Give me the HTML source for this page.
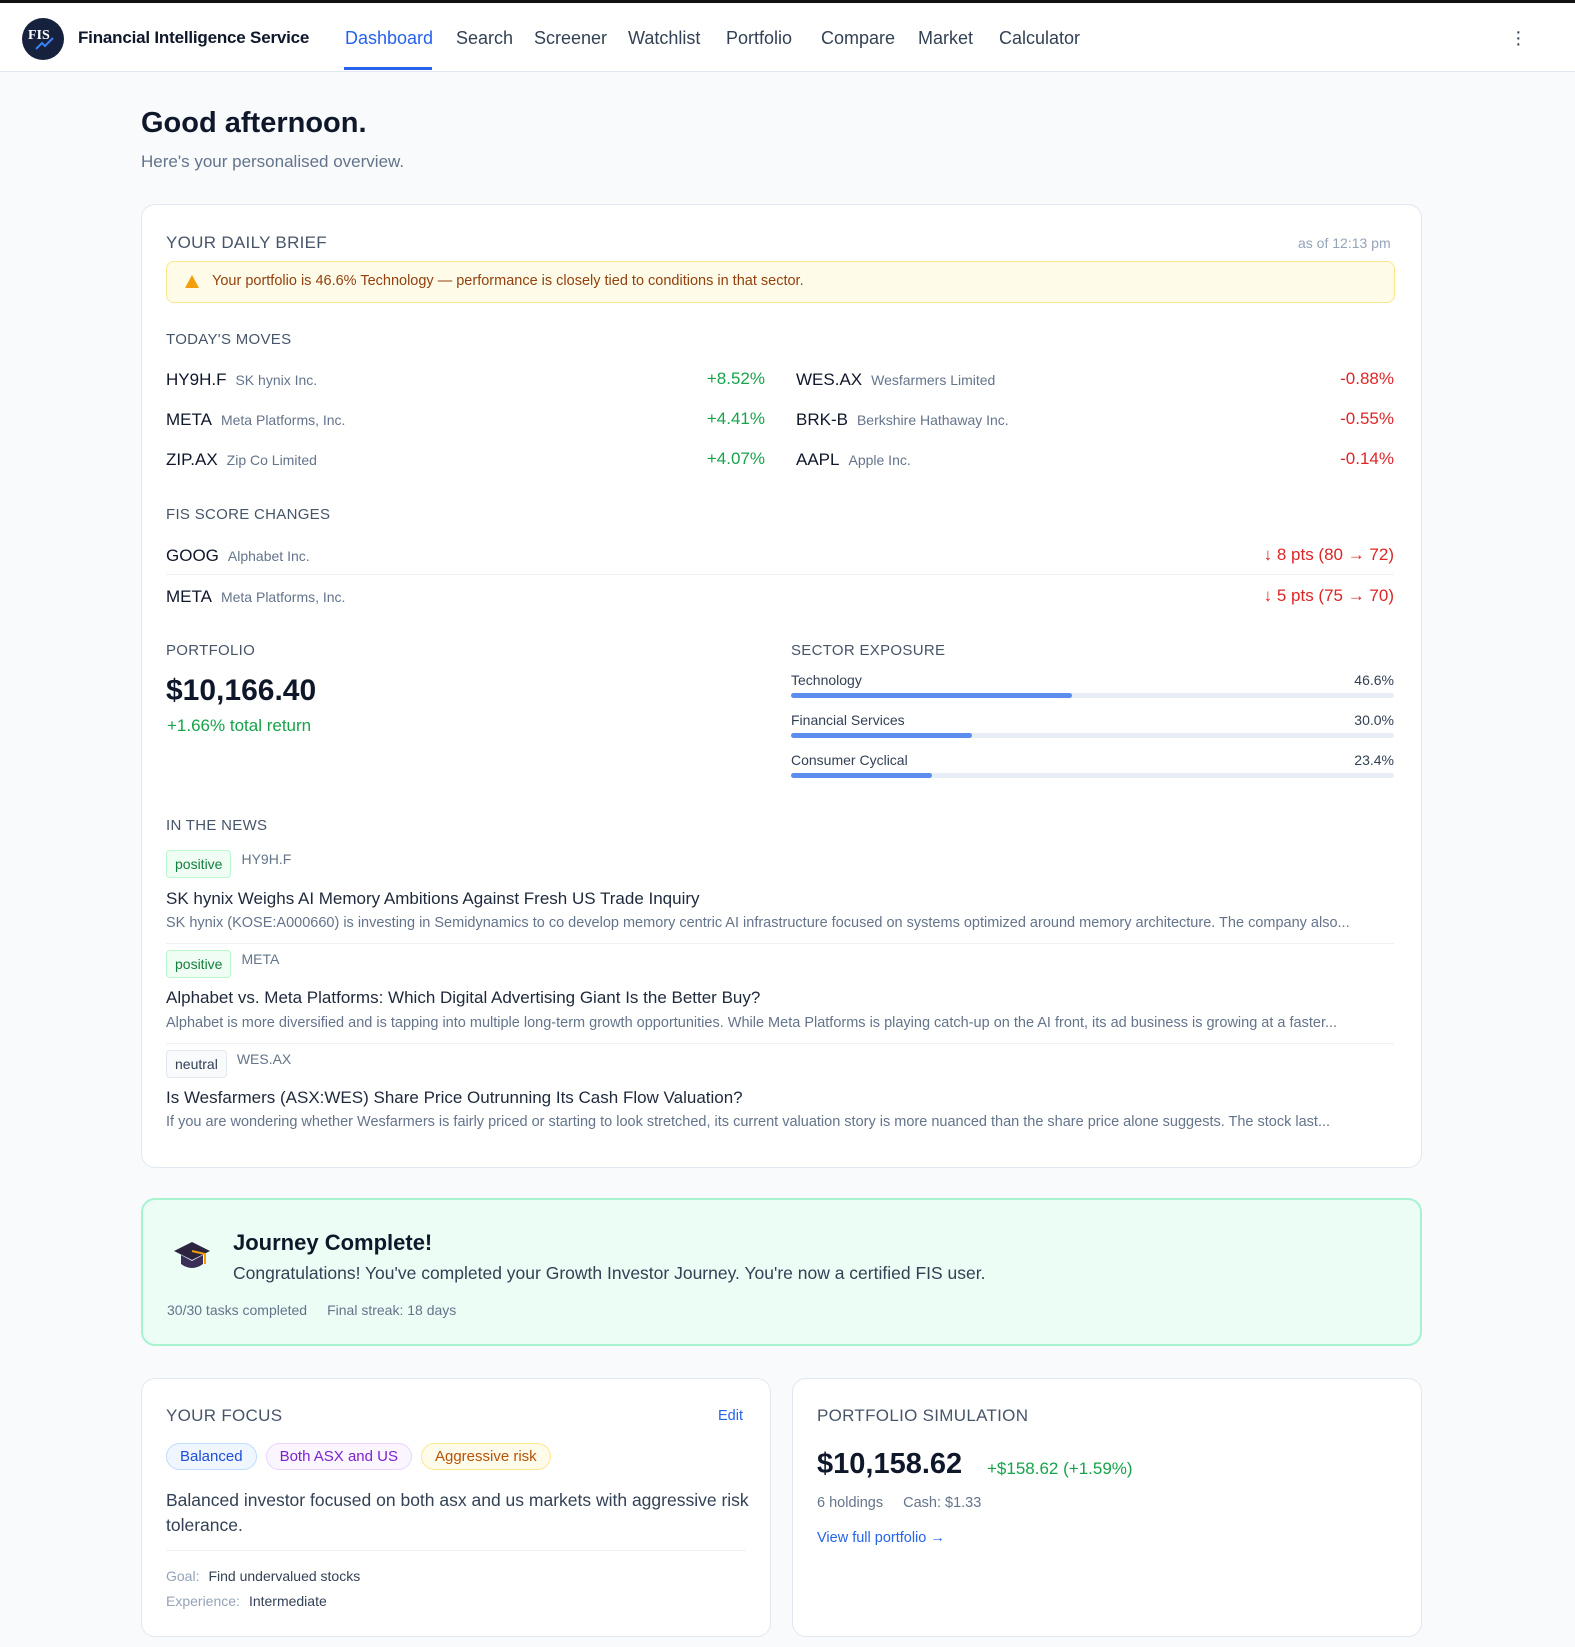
<!DOCTYPE html>
<html><head><meta charset="utf-8"><style>
*{box-sizing:border-box;margin:0;padding:0}
body{width:1575px;height:1647px;background:#f8fafc;font-family:"Liberation Sans",sans-serif;color:#0f172a;position:relative;overflow:hidden}
.a{position:absolute;white-space:nowrap}
.nav{position:absolute;left:0;top:0;width:1575px;height:72px;background:#fff;border-top:3px solid #111;border-bottom:1px solid #e2e8f0}
.nav .i{position:absolute;top:25px;font-size:18px;color:#334155}
.card{position:absolute;background:#fff;border:1px solid #e2e8f0;border-radius:14px}
.lbl{font-size:15px;color:#475569;letter-spacing:.3px}
.tk{font-size:17px;color:#0f172a}
.co{font-size:14px;color:#64748b;margin-left:9px}
.g{color:#16a34a;font-size:17px}
.r{color:#dc2626;font-size:17px}
.bar{position:absolute;height:5px;background:#e8eef5;border-radius:3px;left:791px;width:603px}
.bar i{display:block;height:5px;background:#5b8def;border-radius:3px}
.badge{font-size:14px;padding:5px 8px;border-radius:4px;border:1px solid}
.nt{font-size:17px;color:#1e293b}
.nd{font-size:14.5px;color:#64748b}
.sep{position:absolute;left:166px;width:1228px;height:1px;background:#eef1f5}
.pill{display:inline-block;font-size:15px;padding:4px 13px;border-radius:14px;border:1px solid;margin-right:9px}
</style></head><body>
<div class="nav">
<svg class="a" style="left:22px;top:15px" width="42" height="42" viewBox="0 0 42 42"><circle cx="21" cy="21" r="21" fill="#16213e"/><text x="6" y="21" font-family="Liberation Serif" font-size="14" font-weight="bold" fill="#fff">FIS</text><path d="M14 31 L20 25 L23 28 L31 20" stroke="#3b82f6" stroke-width="2" fill="none"/></svg>
<div class="a" style="left:78px;top:25px;font-size:17px;font-weight:bold;color:#0f172a;letter-spacing:-.2px">Financial Intelligence Service</div>
<div class="i a" style="left:345px;color:#2563eb">Dashboard</div>
<div class="a" style="left:344px;top:64px;width:88px;height:3px;background:#2563eb"></div>
<div class="i a" style="left:456px">Search</div>
<div class="i a" style="left:534px">Screener</div>
<div class="i a" style="left:628px">Watchlist</div>
<div class="i a" style="left:726px">Portfolio</div>
<div class="i a" style="left:821px">Compare</div>
<div class="i a" style="left:918px">Market</div>
<div class="i a" style="left:999px">Calculator</div>
<div class="a" style="left:1515px;top:26px;font-size:20px;color:#334155;line-height:6px">·<br>·<br>·</div>
</div>
<div class="a" style="left:141px;top:107px;font-size:29px;font-weight:bold">Good afternoon.</div>
<div class="a" style="left:141px;top:152px;font-size:17px;color:#64748b">Here's your personalised overview.</div>

<div class="card" style="left:141px;top:204px;width:1281px;height:964px"></div>
<div class="a lbl" style="left:166px;top:233px;font-size:17px">YOUR DAILY BRIEF</div>
<div class="a" style="left:1298px;top:235px;font-size:14px;color:#94a3b8">as of 12:13 pm</div>
<div class="a" style="left:166px;top:261px;width:1229px;height:42px;background:#fefce8;border:1px solid #fde68a;border-radius:8px"></div>
<div class="a" style="left:185px;top:275px;width:0;height:0;border-left:7px solid transparent;border-right:7px solid transparent;border-bottom:13px solid #f59e0b"></div>
<div class="a" style="left:212px;top:273px;font-size:14.5px;color:#92400e">Your portfolio is 46.6% Technology — performance is closely tied to conditions in that sector.</div>

<div class="a lbl" style="left:166px;top:331px">TODAY'S MOVES</div>
<div class="a" style="left:166px;top:370px"><span class="tk">HY9H.F</span><span class="co">SK hynix Inc.</span></div>
<div class="a" style="left:166px;top:410px"><span class="tk">META</span><span class="co">Meta Platforms, Inc.</span></div>
<div class="a" style="left:166px;top:450px"><span class="tk">ZIP.AX</span><span class="co">Zip Co Limited</span></div>
<div class="a g" style="right:810px;top:369px">+8.52%</div>
<div class="a g" style="right:810px;top:409px">+4.41%</div>
<div class="a g" style="right:810px;top:449px">+4.07%</div>
<div class="a" style="left:796px;top:370px"><span class="tk">WES.AX</span><span class="co">Wesfarmers Limited</span></div>
<div class="a" style="left:796px;top:410px"><span class="tk">BRK-B</span><span class="co">Berkshire Hathaway Inc.</span></div>
<div class="a" style="left:796px;top:450px"><span class="tk">AAPL</span><span class="co">Apple Inc.</span></div>
<div class="a r" style="right:181px;top:369px">-0.88%</div>
<div class="a r" style="right:181px;top:409px">-0.55%</div>
<div class="a r" style="right:181px;top:449px">-0.14%</div>

<div class="a lbl" style="left:166px;top:506px">FIS SCORE CHANGES</div>
<div class="a" style="left:166px;top:546px"><span class="tk">GOOG</span><span class="co">Alphabet Inc.</span></div>
<div class="a r" style="right:181px;top:545px">↓ 8 pts (80 → 72)</div>
<div class="sep" style="top:574px"></div>
<div class="a" style="left:166px;top:587px"><span class="tk">META</span><span class="co">Meta Platforms, Inc.</span></div>
<div class="a r" style="right:181px;top:586px">↓ 5 pts (75 → 70)</div>

<div class="a lbl" style="left:166px;top:642px">PORTFOLIO</div>
<div class="a" style="left:166px;top:674px;font-size:30px;font-weight:bold">$10,166.40</div>
<div class="a" style="left:167px;top:716px;font-size:17px;color:#16a34a">+1.66% total return</div>
<div class="a lbl" style="left:791px;top:642px">SECTOR EXPOSURE</div>
<div class="a" style="left:791px;top:672px;font-size:14px;color:#334155">Technology</div><div class="a" style="right:181px;top:672px;font-size:14px;color:#334155">46.6%</div>
<div class="bar" style="top:693px"><i style="width:281px"></i></div>
<div class="a" style="left:791px;top:712px;font-size:14px;color:#334155">Financial Services</div><div class="a" style="right:181px;top:712px;font-size:14px;color:#334155">30.0%</div>
<div class="bar" style="top:733px"><i style="width:181px"></i></div>
<div class="a" style="left:791px;top:752px;font-size:14px;color:#334155">Consumer Cyclical</div><div class="a" style="right:181px;top:752px;font-size:14px;color:#334155">23.4%</div>
<div class="bar" style="top:773px"><i style="width:141px"></i></div>

<div class="a lbl" style="left:166px;top:817px">IN THE NEWS</div>
<div class="a" style="left:166px;top:856px"><span class="badge" style="color:#15803d;background:#f0fdf4;border-color:#bbf7d0">positive</span><span style="font-size:14px;color:#64748b;margin-left:10px;position:relative;top:-5px">HY9H.F</span></div>
<div class="a nt" style="left:166px;top:889px">SK hynix Weighs AI Memory Ambitions Against Fresh US Trade Inquiry</div>
<div class="a nd" style="left:166px;top:915px">SK hynix (KOSE:A000660) is investing in Semidynamics to co develop memory centric AI infrastructure focused on systems optimized around memory architecture. The company also...</div>
<div class="sep" style="top:943px"></div>
<div class="a" style="left:166px;top:956px"><span class="badge" style="color:#15803d;background:#f0fdf4;border-color:#bbf7d0">positive</span><span style="font-size:14px;color:#64748b;margin-left:10px;position:relative;top:-5px">META</span></div>
<div class="a nt" style="left:166px;top:988px">Alphabet vs. Meta Platforms: Which Digital Advertising Giant Is the Better Buy?</div>
<div class="a nd" style="left:166px;top:1015px">Alphabet is more diversified and is tapping into multiple long-term growth opportunities. While Meta Platforms is playing catch-up on the AI front, its ad business is growing at a faster...</div>
<div class="sep" style="top:1043px"></div>
<div class="a" style="left:166px;top:1056px"><span class="badge" style="color:#334155;background:#f8fafc;border-color:#e2e8f0">neutral</span><span style="font-size:14px;color:#64748b;margin-left:10px;position:relative;top:-5px">WES.AX</span></div>
<div class="a nt" style="left:166px;top:1088px">Is Wesfarmers (ASX:WES) Share Price Outrunning Its Cash Flow Valuation?</div>
<div class="a nd" style="left:166px;top:1114px">If you are wondering whether Wesfarmers is fairly priced or starting to look stretched, its current valuation story is more nuanced than the share price alone suggests. The stock last...</div>

<div class="a" style="left:141px;top:1198px;width:1281px;height:148px;background:#ecfdf5;border:2px solid #a7f3d0;border-radius:14px"></div>
<svg class="a" style="left:172px;top:1240px" width="40" height="36" viewBox="0 0 40 36"><path d="M20 2 L38 11 L20 20 L2 11 Z" fill="#2d2540"/><path d="M9 15 V24 Q20 32 31 24 V15 L20 21 Z" fill="#3b2f5a"/><path d="M20 11 L33 14 V24" stroke="#f59e0b" stroke-width="2" fill="none"/></svg>
<div class="a" style="left:233px;top:1230px;font-size:22px;font-weight:bold">Journey Complete!</div>
<div class="a" style="left:233px;top:1263px;font-size:17.5px;color:#334155">Congratulations! You've completed your Growth Investor Journey. You're now a certified FIS user.</div>
<div class="a" style="left:167px;top:1302px;font-size:14px;color:#64748b">30/30 tasks completed<span style="margin-left:20px">Final streak: 18 days</span></div>

<div class="card" style="left:141px;top:1378px;width:630px;height:259px"></div>
<div class="a lbl" style="left:166px;top:1406px;font-size:17px">YOUR FOCUS</div>
<div class="a" style="left:718px;top:1408px;font-size:14.5px;color:#2563eb">Edit</div>
<div class="a" style="left:166px;top:1443px"><span class="pill" style="color:#1d4ed8;background:#eff6ff;border-color:#bfdbfe">Balanced</span><span class="pill" style="color:#7e22ce;background:#faf5ff;border-color:#e9d5ff">Both ASX and US</span><span class="pill" style="color:#b45309;background:#fffbeb;border-color:#fde68a">Aggressive risk</span></div>
<div class="a" style="left:166px;top:1488px;font-size:17.5px;color:#334155;line-height:25px;white-space:normal;width:590px">Balanced investor focused on both asx and us markets with aggressive risk tolerance.</div>
<div class="a" style="left:166px;top:1550px;width:580px;height:1px;background:#eef1f5"></div>
<div class="a" style="left:166px;top:1568px;font-size:14px;color:#94a3b8">Goal:<span style="color:#334155;margin-left:9px">Find undervalued stocks</span></div>
<div class="a" style="left:166px;top:1593px;font-size:14px;color:#94a3b8">Experience:<span style="color:#334155;margin-left:9px">Intermediate</span></div>

<div class="card" style="left:792px;top:1378px;width:630px;height:259px"></div>
<div class="a lbl" style="left:817px;top:1406px;font-size:17px">PORTFOLIO SIMULATION</div>
<div class="a" style="left:817px;top:1448px;font-size:29px;font-weight:bold">$10,158.62</div>
<div class="a" style="left:987px;top:1459px;font-size:17px;color:#16a34a">+$158.62 (+1.59%)</div>
<div class="a" style="left:817px;top:1495px;font-size:14.5px;color:#64748b">6 holdings<span style="margin-left:20px">Cash: $1.33</span></div>
<div class="a" style="left:817px;top:1530px;font-size:14.5px;color:#2563eb">View full portfolio →</div>
</body></html>
